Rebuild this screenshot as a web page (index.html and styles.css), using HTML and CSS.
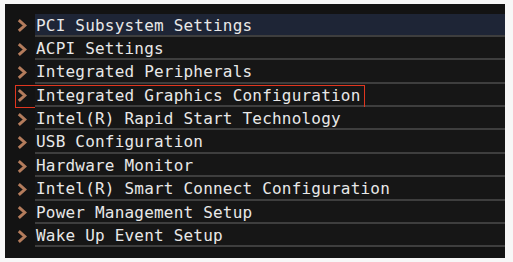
FILE: index.html
```html
<!DOCTYPE html>
<html>
<head>
<meta charset="utf-8">
<link rel="stylesheet" href="styles.css">
</head>
<body>
<div class="panel">
  <ul class="menu">
    <li class="item"><svg class="chev" viewBox="0 0 10 13"><polyline points="1.8,1.2 7.8,6.5 1.8,11.8"/></svg><span class="label active">PCI Subsystem Settings</span></li>
    <li class="item"><svg class="chev" viewBox="0 0 10 13"><polyline points="1.8,1.2 7.8,6.5 1.8,11.8"/></svg><span class="label">ACPI Settings</span></li>
    <li class="item"><svg class="chev" viewBox="0 0 10 13"><polyline points="1.8,1.2 7.8,6.5 1.8,11.8"/></svg><span class="label">Integrated Peripherals</span></li>
    <li class="item selected"><svg class="chev" viewBox="0 0 10 13"><polyline points="1.8,1.2 7.8,6.5 1.8,11.8"/></svg><span class="label">Integrated Graphics Configuration</span></li>
    <li class="item"><svg class="chev" viewBox="0 0 10 13"><polyline points="1.8,1.2 7.8,6.5 1.8,11.8"/></svg><span class="label">Intel(R) Rapid Start Technology</span></li>
    <li class="item"><svg class="chev" viewBox="0 0 10 13"><polyline points="1.8,1.2 7.8,6.5 1.8,11.8"/></svg><span class="label">USB Configuration</span></li>
    <li class="item"><svg class="chev" viewBox="0 0 10 13"><polyline points="1.8,1.2 7.8,6.5 1.8,11.8"/></svg><span class="label">Hardware Monitor</span></li>
    <li class="item"><svg class="chev" viewBox="0 0 10 13"><polyline points="1.8,1.2 7.8,6.5 1.8,11.8"/></svg><span class="label">Intel(R) Smart Connect Configuration</span></li>
    <li class="item"><svg class="chev" viewBox="0 0 10 13"><polyline points="1.8,1.2 7.8,6.5 1.8,11.8"/></svg><span class="label">Power Management Setup</span></li>
    <li class="item"><svg class="chev" viewBox="0 0 10 13"><polyline points="1.8,1.2 7.8,6.5 1.8,11.8"/></svg><span class="label">Wake Up Event Setup</span></li>
  </ul>
</div>
</body>
</html>
```
FILE: styles.css
```css
html, body {
  margin: 0;
  padding: 0;
  background: #f7f7f7;
}
body {
  padding: 4px 8px 4px 5px;
}
.panel {
  width: 500px;
  height: 254px;
  box-sizing: border-box;
  background: #131313;
  padding: 9.5px 0 0 12px;
}
.menu {
  list-style: none;
  margin: 0;
  padding: 0;
}
.item {
  position: relative;
  display: flex;
  align-items: stretch;
  gap: 8px;
}
.chev {
  width: 10px;
  height: 13px;
  align-self: center;
  margin-top: 1px;
  flex: none;
}
.chev polyline {
  fill: none;
  stroke: #b47c5c;
  stroke-width: 3;
  stroke-linecap: butt;
  stroke-linejoin: miter;
}
.label {
  flex: 1;
  line-height: 20px;
  padding-left: 1px;
  padding-top: 2px;
  box-sizing: border-box;
  font-family: "DejaVu Sans Mono", "Liberation Mono", monospace;
  font-size: 16px;
  letter-spacing: 0.2px;
  color: #e8e8e8;
  background: #161616;
  border-bottom: 2px solid #3e3e3e;
  height: 23.4px;
  white-space: nowrap;
}
.label.active {
  background: #1e2536;
}
.selected::after {
  content: "";
  position: absolute;
  left: -2px;
  top: 1px;
  width: 350px;
  height: 23px;
  box-sizing: border-box;
  border: 1.5px solid #e0361f;
}
```
